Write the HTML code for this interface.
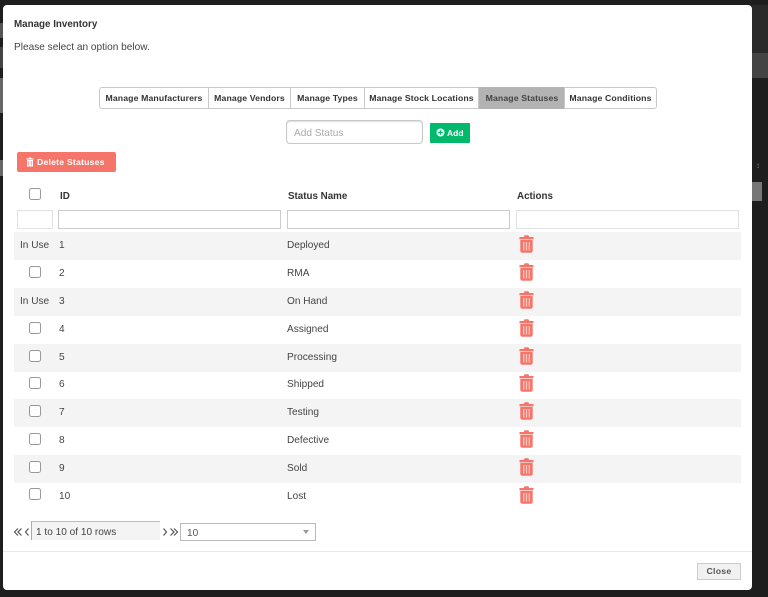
<!DOCTYPE html>
<html><head><meta charset="utf-8"><style>
html,body{margin:0;padding:0;width:768px;height:597px;overflow:hidden;background:#1e1e1e}
*{box-sizing:border-box}
body{font-family:"Liberation Sans",sans-serif;color:#444;font-size:10.1px}
#w{position:absolute;left:0;top:0;width:768px;height:597px;overflow:hidden;background:#1e1e1e;filter:blur(.3px)}
.a{position:absolute;white-space:nowrap}
.b{font-weight:bold;color:#333}
.h{font-size:9.8px;line-height:14px}
.cb{position:absolute;left:28.5px;width:12px;height:12px;border:1.5px solid #999;border-radius:2.5px;background:#fff}
.stripe{position:absolute;left:14px;width:727px;height:28px;background:#f4f4f4}
.t{position:absolute;white-space:nowrap;line-height:14px;font-size:10.1px;color:#444;margin-top:2px}
.tab{position:absolute;top:87px;height:22px;border:1px solid #c8c8c8;background:#fff;border-left:1px solid #c8c8c8;font-weight:bold;font-size:8.7px;letter-spacing:.12px;color:#333;text-align:center;line-height:20px;white-space:nowrap}
.in{position:absolute;top:210px;height:19px;background:#fff;border:1px solid #ccc}
svg.tr{position:absolute;left:519px;width:15px;height:18px}
</style></head><body><div id="w">
<div class="a" style="left:0;top:23px;width:3px;height:15px;background:#555"></div>
<div class="a" style="left:0;top:47px;width:3px;height:21px;background:#444"></div>
<div class="a" style="left:0;top:78px;width:3px;height:35px;background:#666"></div>
<div class="a" style="left:0;top:160px;width:3px;height:16px;background:#666"></div>
<div class="a" style="left:752px;top:5px;width:16px;height:48px;background:#2a2a2a"></div>
<div class="a" style="left:752px;top:53px;width:16px;height:25px;background:#444"></div>
<div class="a" style="left:752px;top:182px;width:10px;height:19px;background:#777"></div>
<div class="a" style="left:756px;top:161px;color:#777;font-size:8px">&#8597;</div>

<div class="a" style="left:3px;top:5px;width:749px;height:585px;background:#fff;border-radius:4px"></div>

<div class="a b h" style="left:14px;top:18px">Manage Inventory</div>
<div class="a" style="left:14px;top:41px;font-size:10.1px;line-height:14px;color:#444">Please select an option below.</div>

<div class="tab" style="left:99px;width:110px;border-radius:3px 0 0 3px">Manage Manufacturers</div>
<div class="tab" style="left:208px;width:83px">Manage Vendors</div>
<div class="tab" style="left:290px;width:75px">Manage Types</div>
<div class="tab" style="left:364px;width:115px">Manage Stock Locations</div>
<div class="tab" style="left:479px;width:86px;background:#b3b3b3;color:#444;border-color:#b3b3b3">Manage Statuses</div>
<div class="tab" style="left:564px;width:93px;border-radius:0 3px 3px 0">Manage Conditions</div>

<div class="a" style="left:286px;top:120px;width:137px;height:24px;border:1px solid #c8c8c8;border-radius:4px;background:#fff;box-shadow:inset 0 1px 1px #ddd;color:#aaa;font-size:10.1px;line-height:24px;padding-left:7px;padding-top:1px">Add Status</div>
<div class="a" style="left:430px;top:123px;width:40px;height:20px;background:#00b96b;border-radius:1px;color:#fff;font-weight:bold;font-size:8.5px;line-height:20px;padding-left:17px">Add</div>
<svg class="a" style="left:436px;top:128px" width="9" height="9" viewBox="0 0 9 9"><circle cx="4.5" cy="4.5" r="4" fill="#fff"/><path d="M4.5 2.2v4.6M2.2 4.5h4.6" stroke="#00b96b" stroke-width="1.4"/></svg>

<div class="a" style="left:17px;top:152px;width:99px;height:20px;background:#f5756a;border-radius:2px;color:#fff;font-weight:bold;font-size:8.7px;letter-spacing:.2px;line-height:20px;padding-left:20px">Delete Statuses</div>
<svg class="a" style="left:26px;top:157px" width="8" height="10" viewBox="0 0 8 10"><path d="M3 .5h2l.5 1H7.6v1H.4v-1h2.1zM1 3h6v6.5H1z" fill="#fff"/><path d="M2.8 4v4.5M5.2 4v4.5" stroke="#f5756a" stroke-width=".7"/></svg>

<div class="cb" style="top:188px"></div>
<div class="a b h" style="left:60px;top:190px">ID</div>
<div class="a b h" style="left:288px;top:190px">Status Name</div>
<div class="a b h" style="left:517px;top:190px">Actions</div>

<div class="in" style="left:17px;width:36px;border-color:#e2e2e2"></div>
<div class="in" style="left:58px;width:223px"></div>
<div class="in" style="left:287px;width:223px"></div>
<div class="in" style="left:516px;width:223px;border-color:#e2e2e2"></div>

<div class="stripe" style="top:232px"></div>
<div class="stripe" style="top:288px"></div>
<div class="stripe" style="top:344px"></div>
<div class="stripe" style="top:399px"></div>
<div class="stripe" style="top:455px"></div>

<div class="t" style="left:20px;top:237px">In Use</div>
<div class="t" style="left:20px;top:293px">In Use</div>
<div class="cb" style="top:266px"></div>
<div class="cb" style="top:322px"></div>
<div class="cb" style="top:350px"></div>
<div class="cb" style="top:377px"></div>
<div class="cb" style="top:405px"></div>
<div class="cb" style="top:433px"></div>
<div class="cb" style="top:461px"></div>
<div class="cb" style="top:488px"></div>

<div class="t" style="left:59px;top:237px">1</div><div class="t" style="left:287px;top:237px">Deployed</div>
<div class="t" style="left:59px;top:265px">2</div><div class="t" style="left:287px;top:265px">RMA</div>
<div class="t" style="left:59px;top:293px">3</div><div class="t" style="left:287px;top:293px">On Hand</div>
<div class="t" style="left:59px;top:321px">4</div><div class="t" style="left:287px;top:321px">Assigned</div>
<div class="t" style="left:59px;top:349px">5</div><div class="t" style="left:287px;top:349px">Processing</div>
<div class="t" style="left:59px;top:376px">6</div><div class="t" style="left:287px;top:376px">Shipped</div>
<div class="t" style="left:59px;top:404px">7</div><div class="t" style="left:287px;top:404px">Testing</div>
<div class="t" style="left:59px;top:432px">8</div><div class="t" style="left:287px;top:432px">Defective</div>
<div class="t" style="left:59px;top:460px">9</div><div class="t" style="left:287px;top:460px">Sold</div>
<div class="t" style="left:59px;top:488px">10</div><div class="t" style="left:287px;top:488px">Lost</div>

<svg width="0" height="0" style="position:absolute"><defs><symbol id="tr" viewBox="0 0 15 18"><path d="M4.600 2 5.700 .3h3.600L10.400 2h4.100v2.400H.5V2zM1.300 5h12.400v10.800c0 1-.7 1.900-1.700 1.900H3c-1 0-1.700-.9-1.700-1.900z" fill="#f5756a"/><path d="M4.700 7v8.500M7.500 7v8.500M10.300 7v8.500" stroke="#fcc6bf" stroke-width="1.300"/></symbol></defs></svg>
<svg class="tr" style="top:235px"><use href="#tr"/></svg>
<svg class="tr" style="top:263px"><use href="#tr"/></svg>
<svg class="tr" style="top:291px"><use href="#tr"/></svg>
<svg class="tr" style="top:319px"><use href="#tr"/></svg>
<svg class="tr" style="top:347px"><use href="#tr"/></svg>
<svg class="tr" style="top:374px"><use href="#tr"/></svg>
<svg class="tr" style="top:402px"><use href="#tr"/></svg>
<svg class="tr" style="top:430px"><use href="#tr"/></svg>
<svg class="tr" style="top:458px"><use href="#tr"/></svg>
<svg class="tr" style="top:486px"><use href="#tr"/></svg>

<svg class="a" style="left:13px;top:527px" width="18" height="10" viewBox="0 0 18 10" fill="none" stroke="#555" stroke-width="1.2"><path d="M5 1.500 1.500 5 5 8.500M8.500 1.500 5 5 8.500 8.500M15.500 1.500 12.500 5 15.500 8.500"/></svg>
<div class="a" style="left:31px;top:521px;width:129px;height:19px;background:#f4f4f4;border-left:1px solid #aaa;border-top:1px solid #bbb;font-size:10.1px;line-height:20px;padding-left:4px;padding-top:1px;color:#444">1 to 10 of 10 rows</div>
<svg class="a" style="left:162px;top:527px" width="18" height="10" viewBox="0 0 18 10" fill="none" stroke="#555" stroke-width="1.2"><path d="M1.500 1.500 4.500 5 1.500 8.500M8.500 1.500 12 5 8.500 8.500M12 1.500 15.500 5 12 8.500"/></svg>
<div class="a" style="left:180px;top:523px;width:136px;height:18px;background:#fff;border:1px solid #bbb;font-size:10.1px;line-height:18px;padding-left:6px;padding-top:1px;color:#555">10</div>
<div class="a" style="left:303px;top:530px;width:0;height:0;border-left:3px solid transparent;border-right:3px solid transparent;border-top:4px solid #999"></div>

<div class="a" style="left:3px;top:551px;width:749px;height:1px;background:#e8e8e8"></div>
<div class="a" style="left:697px;top:563px;width:44px;height:17px;background:#f1f1f1;border:1px solid #ccc;font-weight:bold;font-size:8.7px;line-height:15px;text-align:center;color:#555;letter-spacing:.25px">Close</div>
</div></body></html>
